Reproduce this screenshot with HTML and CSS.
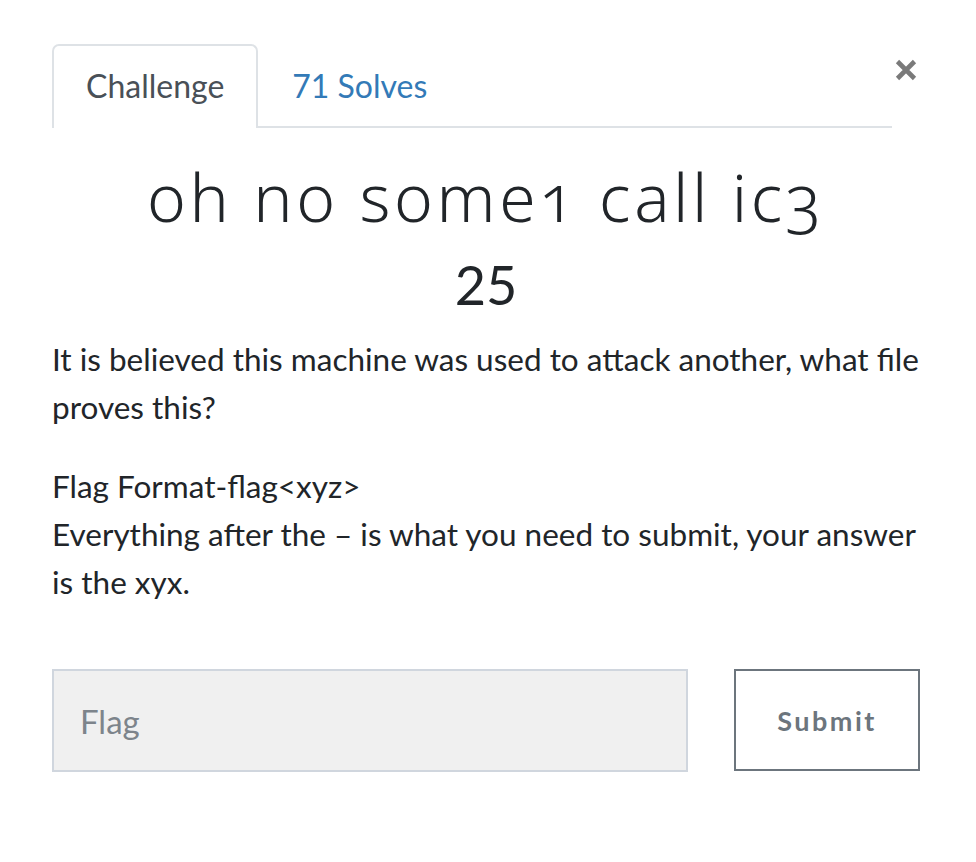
FILE: index.html
```html
<!DOCTYPE html>
<html lang="en">
<head>
<meta charset="utf-8">
<title>oh no some1 call ic3</title>
<link rel="stylesheet" href="styles.css">
</head>
<body>
<div class="modal">
  <div class="header">
    <ul class="tabs">
      <li class="tab active">Challenge</li>
      <li class="tab link">71 Solves</li>
    </ul>
    <button class="close" aria-label="Close">
      <svg viewBox="0 0 24 24" width="24" height="24"><path d="M3.5 3.5 L20.5 20.5 M20.5 3.5 L3.5 20.5" stroke="#7a7a7a" stroke-width="4.6" fill="none"/></svg>
    </button>
  </div>
  <h2 class="name">oh no some1 call ic3</h2>
  <h4 class="value">25</h4>
  <div class="desc">
    <p>It is believed this machine was used to attack another, what file proves this?</p>
    <p>Flag Format-flag&lt;xyz&gt;<br>Everything after the – is what you need to submit, your answer is the xyx.</p>
  </div>
  <div class="submit-row">
    <input class="flag" type="text" placeholder="Flag">
    <button class="submit">Submit</button>
  </div>
</div>
</body>
</html>
```

FILE: styles.css
```css
body {
  margin: 0;
  background: #fff;
  color: #212529;
  font-family: Lato, "Liberation Sans", sans-serif;
}

.modal {
  width: 868px;
  margin-left: 52px;
  padding-top: 44px;
}

.header {
  display: flex;
  align-items: flex-start;
}

.tabs {
  flex: 1;
  display: flex;
  list-style: none;
  margin: 0;
  padding: 0;
  border-bottom: 2px solid #dee2e6;
}

.tab {
  height: 80px;
  line-height: 80px;
  padding: 0 32px;
  font-size: 32px;
  border: 2px solid transparent;
  border-bottom: 0;
  border-radius: 7px 7px 0 0;
  margin-bottom: -2px;
}

.tab.active {
  color: #495057;
  border-color: #dee2e6;
  background: #fff;
  height: 82px;
}

.tab.link {
  color: #337ab7;
}

.close {
  width: 28px;
  height: 28px;
  margin-top: 12px;
  padding: 0;
  border: 0;
  background: none;
  display: flex;
  align-items: center;
  justify-content: center;
}

.name {
  margin: 28px 0 0;
  text-align: center;
  font-family: "Noto Sans", sans-serif;
  font-weight: 350;
  font-size: 66px;
  line-height: 80px;
  letter-spacing: 3.6px;
  font-variant-numeric: oldstyle-nums;
}

.value {
  margin: 14px 0 0;
  text-align: center;
  font-weight: 400;
  font-size: 54px;
  line-height: 70px;
}

.desc {
  margin-top: 15px;
  font-size: 31.5px;
  line-height: 48px;
}

.desc p {
  margin: 0 0 31px;
}

.submit-row {
  display: flex;
  gap: 46px;
  margin-top: 63px;
}

.flag {
  flex: 1;
  height: 103px;
  box-sizing: border-box;
  border: 2px solid #d0d6de;
  background: #f0f0f0;
  padding: 0 26px;
  font-family: Lato, sans-serif;
  font-size: 33px;
  color: #495057;
  outline: none;
}

.flag::placeholder {
  color: #7d848b;
}

.submit {
  width: 186px;
  height: 102px;
  box-sizing: border-box;
  border: 2px solid #6c757d;
  background: #fff;
  color: #6c757d;
  font-family: Lato, sans-serif;
  font-weight: 700;
  font-size: 27px;
  letter-spacing: 2.5px;
}
```
